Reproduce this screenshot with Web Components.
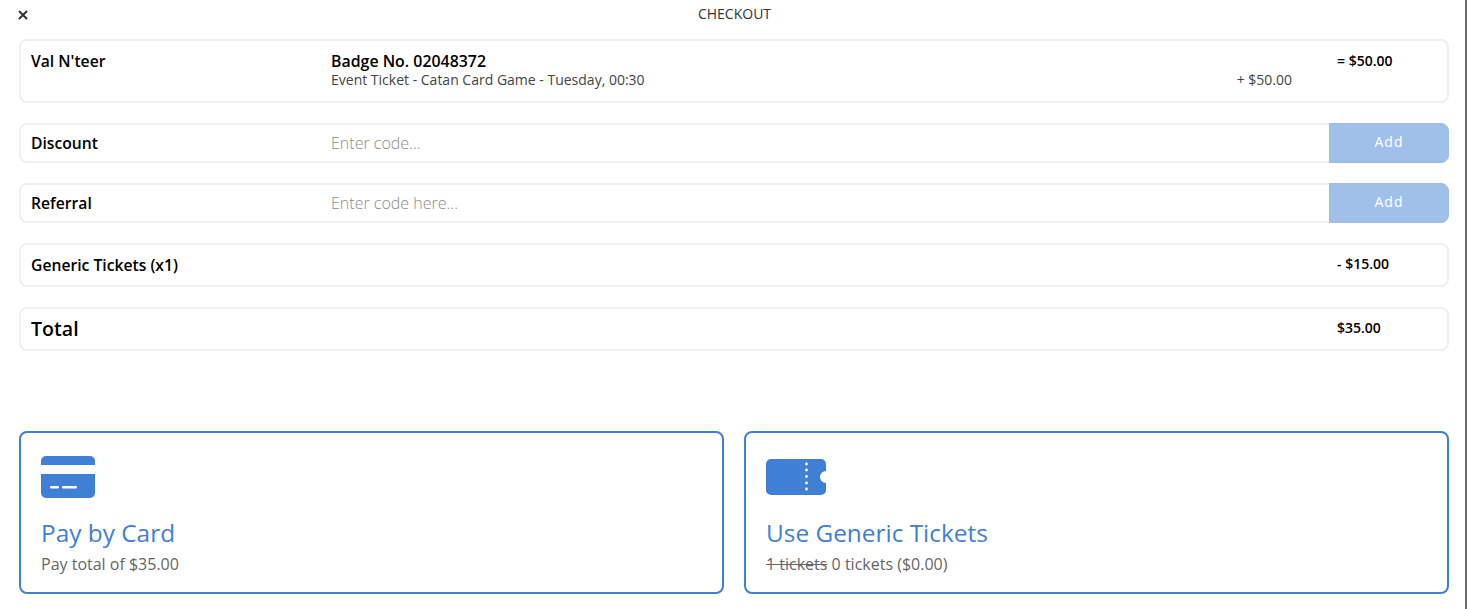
<!DOCTYPE html>
<html>
<head>
<meta charset="utf-8">
<title>Checkout</title>
<style>
  html, body { margin: 0; padding: 0; background: #fff; }
  body { font-family: "Open Sans", sans-serif; color: #000; height: 609px; overflow: hidden; }
</style>
</head>
<body>
<checkout-page></checkout-page>

<template id="checkout-page-tpl">
  <style>
    :host { display: block; height: 609px; box-sizing: border-box; border-right: 2px solid #6a6a6a; }
    header { display: flex; align-items: center; justify-content: center; height: 28px; margin-bottom: 11px; padding-left: 4px; position: relative; font-size: 14px; line-height: 20px; color: #333; }
    header svg { position: absolute; left: 18px; top: 10px; }
    main { display: flex; flex-direction: column; gap: 20px; margin: 0 16px 0 19px; }
    .pay { display: flex; gap: 20px; margin-top: 60px; }
    .total-label { display: block; margin-top: -2px; font-size: 19.6px; font-weight: 600; }
    .sub { font-size: 14px; color: #444; display: flex; justify-content: space-between; padding-right: 45px; line-height: 18px; }
    .badge { font-size: 15.9px; font-weight: 600; line-height: 20px; }
    s { text-decoration: line-through; }
  </style>
  <header>
    <svg width="10" height="10" viewBox="0 0 10 10" aria-hidden="true"><path d="M1 1l8 8M9 1l-8 8" stroke="#333" stroke-width="2" fill="none"/></svg>
    <span>CHECKOUT</span>
  </header>
  <main>
    <line-row height="64" align="start">
      <span slot="label">Val N'teer</span>
      <div>
        <div class="badge">Badge No. 02048372</div>
        <div class="sub"><span>Event Ticket - Catan Card Game - Tuesday, 00:30</span><span>+ $50.00</span></div>
      </div>
      <span slot="amount">= $50.00</span>
    </line-row>
    <code-row label="Discount" placeholder="Enter code..."></code-row>
    <code-row label="Referral" placeholder="Enter code here..."></code-row>
    <line-row height="44">
      <span slot="label">Generic Tickets (x1)</span>
      <span slot="amount">- $15.00</span>
    </line-row>
    <line-row height="44">
      <span slot="label" class="total-label">Total</span>
      <span slot="amount">$35.00</span>
    </line-row>
    <div class="pay">
      <pay-card heading="Pay by Card">
        <svg slot="icon" width="54" height="42" viewBox="0 0 54 42" aria-hidden="true">
          <path fill="#3f80d5" d="M0 9V5a5 5 0 0 1 5-5h44a5 5 0 0 1 5 5v4zM0 18h54v19a5 5 0 0 1-5 5H5a5 5 0 0 1-5-5z"/>
          <rect x="9" y="30" width="9" height="2.6" rx="1.3" fill="#fff"/>
          <rect x="21" y="30" width="15" height="2.6" rx="1.3" fill="#fff"/>
        </svg>
        Pay total of $35.00
      </pay-card>
      <pay-card heading="Use Generic Tickets">
        <svg slot="icon" width="60" height="36" viewBox="0 0 60 36" aria-hidden="true" style="margin-top:3px">
          <path fill="#3f80d5" d="M5 0h50a5 5 0 0 1 5 5v7a6 6 0 0 0 0 12v7a5 5 0 0 1-5 5H5a5 5 0 0 1-5-5V5a5 5 0 0 1 5-5z"/>
          <g fill="#fff"><circle cx="40.500" cy="5" r="1.400"/><circle cx="40.500" cy="11" r="1.400"/><circle cx="40.500" cy="17.500" r="1.400"/><circle cx="40.500" cy="24" r="1.400"/><circle cx="40.500" cy="30" r="1.400"/></g>
        </svg>
        <s>1 tickets</s> 0 tickets ($0.00)
      </pay-card>
    </div>
  </main>
</template>

<template id="line-row-tpl">
  <style>
    :host { display: block; }
    .row { display: grid; grid-template-columns: 300px 1fr 110px; box-sizing: border-box; align-items: center; border: 2px solid #efefef; border-radius: 8px; padding: 0 0 0 10px; }
    :host([align=start]) .row { align-items: start; padding-top: 10px; }
    .label { font-size: 15.7px; font-weight: 600; }
    .amount { font-size: 14px; font-weight: 600; margin-top: -4px; }
    :host([align=start]) .label { line-height: 20px; }
    :host([align=start]) .amount { line-height: 20px; margin-top: 0; }
  </style>
  <div class="row">
    <div class="label"><slot name="label"></slot></div>
    <div><slot></slot></div>
    <div class="amount"><slot name="amount"></slot></div>
  </div>
</template>

<template id="code-row-tpl">
  <style>
    :host { display: block; }
    .row { display: flex; height: 40px; box-sizing: border-box; align-items: stretch; border: 2px solid #efefef; border-radius: 8px; padding-left: 10px; position: relative; }
    label { width: 300px; font-size: 15.7px; font-weight: 600; align-self: center; }
    input { flex: 1; min-width: 0; border: 0; outline: 0; padding: 0; background: none; font: 300 16px "Open Sans", sans-serif; color: #333; }
    input::placeholder { color: #8c8c8c; opacity: 1; }
    button { width: 120px; margin: -2px -2px -2px 0; border: 1px solid #9abce6; border-radius: 0 8px 8px 0; background: #9fc0e9; color: #fff; font: 14px "Open Sans", sans-serif; letter-spacing: 1px; padding: 0 0 3px; }
  </style>
  <div class="row">
    <label></label>
    <input type="text">
    <button type="button">Add</button>
  </div>
</template>

<template id="pay-card-tpl">
  <style>
    :host { display: block; flex: 1; min-width: 0; }
    .card { height: 163px; box-sizing: border-box; border: 2px solid #3f80d5; border-radius: 8px; padding: 23px 20px 0; }
    .icon { height: 45px; display: flow-root; }
    .icon ::slotted(svg) { display: block; }
    h2 { margin: 16px 0 0; font-size: 24.4px; font-weight: 400; line-height: 32px; color: #3f80d5; letter-spacing: 0; }
    p { margin: 4px 0 0; font-size: 16px; line-height: 22px; color: #666; }
  </style>
  <div class="card">
    <div class="icon"><slot name="icon"></slot></div>
    <h2></h2>
    <p><slot></slot></p>
  </div>
</template>

<script>
  function fromTemplate(el, id) {
    let root = el.attachShadow({mode: 'open'});
    root.appendChild(document.getElementById(id).content.cloneNode(true));
    return root;
  }

  class CheckoutPage extends HTMLElement {
    connectedCallback() {
      if (!this.shadowRoot) { fromTemplate(this, 'checkout-page-tpl'); }
    }
  }

  class LineRow extends HTMLElement {
    connectedCallback() {
      if (this.shadowRoot) { return; }
      let root = fromTemplate(this, 'line-row-tpl');
      root.querySelector('.row').style.height = this.getAttribute('height') + 'px';
    }
  }

  class CodeRow extends HTMLElement {
    connectedCallback() {
      if (this.shadowRoot) { return; }
      let root = fromTemplate(this, 'code-row-tpl');
      root.querySelector('label').textContent = this.getAttribute('label');
      root.querySelector('input').placeholder = this.getAttribute('placeholder');
    }
  }

  class PayCard extends HTMLElement {
    connectedCallback() {
      if (this.shadowRoot) { return; }
      let root = fromTemplate(this, 'pay-card-tpl');
      root.querySelector('h2').textContent = this.getAttribute('heading');
    }
  }

  customElements.define('line-row', LineRow);
  customElements.define('code-row', CodeRow);
  customElements.define('pay-card', PayCard);
  customElements.define('checkout-page', CheckoutPage);
</script>
</body>
</html>
